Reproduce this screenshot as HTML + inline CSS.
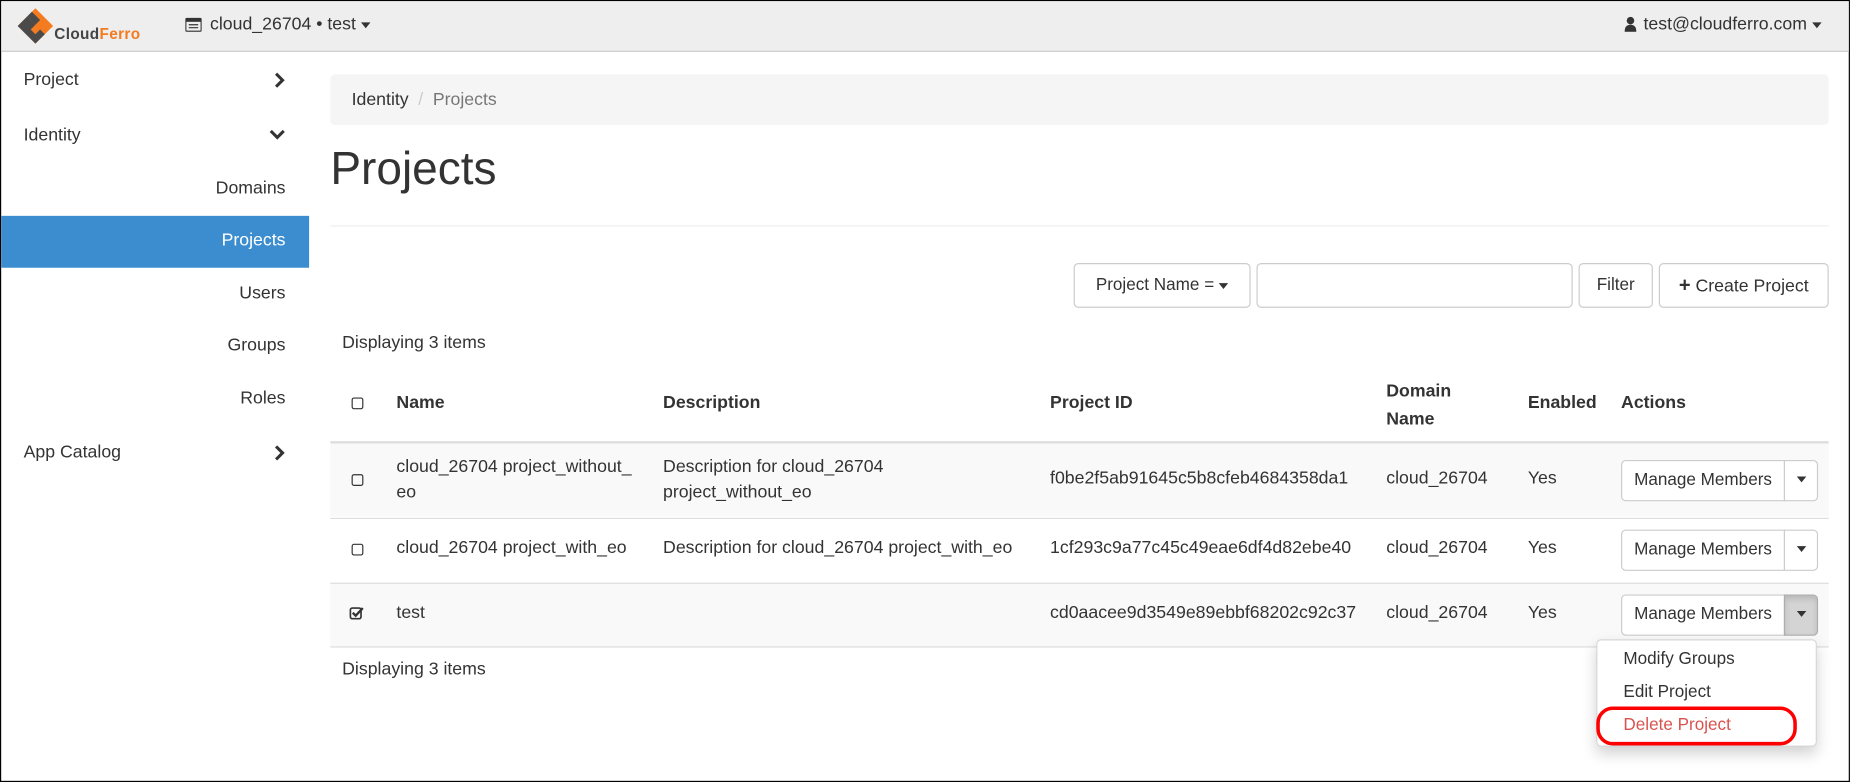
<!DOCTYPE html>
<html><head><meta charset="utf-8"><style>
html,body{margin:0;padding:0;background:#fff;overflow:hidden}
body{width:1850px;height:782px;position:relative}
#w{position:absolute;left:0;top:0;width:1568px;height:663px;transform:scale(1.1798,1.1795);transform-origin:0 0;font-family:"Liberation Sans",Arial,sans-serif;font-size:15px;color:#333;box-sizing:border-box;border:1px solid #000;overflow:hidden}
.a{position:absolute;white-space:nowrap}
.nav{position:absolute;left:0;top:0;width:1568px;height:42px;background:#eee;border-bottom:1px solid #ccc}
.side{color:#333;font-size:15px}
.btn{position:absolute;border:1px solid #ccc;border-radius:4px;background:#fff;box-sizing:border-box;font-size:14.5px;text-align:center}
.row{position:absolute;left:279px;width:1270px;border-top:1px solid #ddd}
.cb{position:absolute;width:10px;height:10px;border:1.3px solid #333;border-radius:2px;box-sizing:border-box}
.car{display:inline-block;width:0;height:0;border-left:4px solid transparent;border-right:4px solid transparent;border-top:5px solid #333;vertical-align:middle}
b{font-weight:bold}
</style></head><body><div id="w">
<div class="nav"></div>
<!-- logo -->
<svg class="a" style="left:13px;top:5px" width="32" height="33" viewBox="0 0 32 33"><polygon points="16,1 31,16 16,31 1,16" fill="#f47b20"/><polygon points="1,16 9,8 16,15 12,19 16,23 20,19 24,23 16,31" fill="#4a4a4a"/><polygon points="9,8 16,15 20,11 13,4" fill="#4a4a4a"/><line x1="12" y1="19" x2="20" y2="11" stroke="#fff" stroke-width="0"/></svg>
<div class="a" style="left:45px;top:20px;font-weight:bold;font-size:13px;letter-spacing:0.3px;color:#444">Cloud<span style="color:#f47b20">Ferro</span></div>
<svg class="a" style="left:156px;top:14px" width="14" height="12" viewBox="0 0 14 12"><rect x="0.5" y="0.5" width="13" height="11" rx="1" fill="none" stroke="#333"/><rect x="0.5" y="0.5" width="13" height="3" fill="#333"/><line x1="3" y1="6" x2="11" y2="6" stroke="#333"/><line x1="3" y1="8.5" x2="11" y2="8.5" stroke="#333"/></svg>
<div class="a" style="left:177px;top:11px;font-size:15px">cloud_26704 • test <span class="car"></span></div>
<svg class="a" style="left:1376px;top:13px" width="10" height="13" viewBox="0 0 10 13"><circle cx="5" cy="3.5" r="3.2" fill="#333"/><path d="M0 13 Q0 7 5 7 Q10 7 10 13Z" fill="#333"/></svg>
<div class="a" style="left:1392px;top:11px;font-size:15px">test@cloudferro.com <span class="car"></span></div>

<!-- sidebar -->
<div class="a side" style="left:19px;top:58px">Project</div>
<svg class="a" style="left:231px;top:60px" width="10" height="14" viewBox="0 0 10 14"><path d="M2 1.5 L7.5 7 L2 12.5" stroke="#333" stroke-width="2.6" fill="none"/></svg>
<div class="a side" style="left:19px;top:105px">Identity</div>
<svg class="a" style="left:227px;top:108px" width="14" height="10" viewBox="0 0 14 10"><path d="M1.5 2 L7 7.5 L12.5 2" stroke="#333" stroke-width="2.6" fill="none"/></svg>
<div class="a side" style="right:1325px;top:150px">Domains</div>
<div class="a" style="left:0;top:182px;width:261px;height:44px;background:#3b8dcf"></div>
<div class="a" style="right:1325px;top:194px;font-size:15px;color:#fff">Projects</div>
<div class="a side" style="right:1325px;top:239px">Users</div>
<div class="a side" style="right:1325px;top:283px">Groups</div>
<div class="a side" style="right:1325px;top:328px">Roles</div>
<div class="a side" style="left:19px;top:374px">App Catalog</div>
<svg class="a" style="left:231px;top:376px" width="10" height="14" viewBox="0 0 10 14"><path d="M2 1.5 L7.5 7 L2 12.5" stroke="#333" stroke-width="2.6" fill="none"/></svg>

<!-- breadcrumb -->
<div class="a" style="left:279px;top:62px;width:1270px;height:43px;background:#f5f5f5;border-radius:4px"></div>
<div class="a" style="left:297px;top:75px;font-size:15px">Identity <span style="color:#ccc;padding:0 4px">/</span> <span style="color:#777">Projects</span></div>
<div class="a" style="left:279px;top:121px;font-size:39px;color:#333">Projects</div>
<div class="a" style="left:279px;top:190px;width:1270px;border-top:1px solid #eee"></div>

<!-- filter -->
<div class="btn" style="left:909px;top:222px;width:150px;height:38px;line-height:36px">Project Name = <span class="car"></span></div>
<div class="btn" style="left:1064px;top:222px;width:268px;height:38px"></div>
<div class="btn" style="left:1337px;top:222px;width:63px;height:38px;line-height:36px">Filter</div>
<div class="btn" style="left:1405px;top:222px;width:144px;height:38px;line-height:36px;font-size:15px"><b style="font-size:17px">+</b> Create Project</div>

<div class="a" style="left:289px;top:281px">Displaying 3 items</div>

<!-- header -->
<div class="cb" style="left:297px;top:336px"></div>
<div class="a" style="left:335px;top:332px"><b>Name</b></div>
<div class="a" style="left:561px;top:332px"><b>Description</b></div>
<div class="a" style="left:889px;top:332px"><b>Project ID</b></div>
<div class="a" style="left:1174px;top:319px;line-height:24px"><b>Domain<br>Name</b></div>
<div class="a" style="left:1294px;top:332px"><b>Enabled</b></div>
<div class="a" style="left:1373px;top:332px"><b>Actions</b></div>
<div class="a" style="left:279px;top:373px;width:1270px;border-top:2px solid #ddd"></div>

<div class="row" style="top:375px;height:62px;background:#f9f9f9;border-top:none"></div>
<div class="row" style="top:438px;height:54px;background:#fff"></div>
<div class="row" style="top:493px;height:54px;background:#f9f9f9"></div>
<div class="row" style="top:547px;height:0"></div>

<div class="cb" style="left:297px;top:401px"></div>
<div class="a" style="left:335px;top:384px;line-height:22px">cloud_26704 project_without_<br>eo</div>
<div class="a" style="left:561px;top:384px;line-height:22px">Description for cloud_26704<br>project_without_eo</div>
<div class="a" style="left:889px;top:396px">f0be2f5ab91645c5b8cfeb4684358da1</div>
<div class="a" style="left:1174px;top:396px">cloud_26704</div>
<div class="a" style="left:1294px;top:396px">Yes</div>

<div class="cb" style="left:297px;top:460px"></div>
<div class="a" style="left:335px;top:455px">cloud_26704 project_with_eo</div>
<div class="a" style="left:561px;top:455px">Description for cloud_26704 project_with_eo</div>
<div class="a" style="left:889px;top:455px">1cf293c9a77c45c49eae6df4d82ebe40</div>
<div class="a" style="left:1174px;top:455px">cloud_26704</div>
<div class="a" style="left:1294px;top:455px">Yes</div>

<svg class="a" style="left:295px;top:513px" width="14" height="12" viewBox="0 0 14 12"><rect x="1" y="1.5" width="9" height="9" rx="1.5" fill="none" stroke="#333" stroke-width="1.4"/><path d="M3 5.5 L5.5 8 L11.5 1.5" stroke="#333" stroke-width="2" fill="none"/></svg>
<div class="a" style="left:335px;top:510px">test</div>
<div class="a" style="left:889px;top:510px">cd0aacee9d3549e89ebbf68202c92c37</div>
<div class="a" style="left:1174px;top:510px">cloud_26704</div>
<div class="a" style="left:1294px;top:510px">Yes</div>

<!-- action buttons -->
<div class="btn" style="left:1373px;top:389px;width:139px;height:35px;line-height:33px;border-radius:4px 0 0 4px">Manage Members</div>
<div class="btn" style="left:1511px;top:389px;width:29px;height:35px;line-height:31px;border-radius:0 4px 4px 0"><span class="car"></span></div>
<div class="btn" style="left:1373px;top:448px;width:139px;height:35px;line-height:33px;border-radius:4px 0 0 4px">Manage Members</div>
<div class="btn" style="left:1511px;top:448px;width:29px;height:35px;line-height:31px;border-radius:0 4px 4px 0"><span class="car"></span></div>
<div class="btn" style="left:1373px;top:503px;width:139px;height:35px;line-height:33px;border-radius:4px 0 0 4px">Manage Members</div>
<div class="btn" style="left:1511px;top:503px;width:29px;height:35px;line-height:31px;border-radius:0 4px 4px 0;background:#d4d4d4;border-color:#adadad;box-shadow:inset 0 3px 5px rgba(0,0,0,.125)"><span class="car"></span></div>

<div class="a" style="left:289px;top:558px">Displaying 3 items</div>

<!-- dropdown -->
<div class="a" style="left:1352px;top:541px;width:187px;height:91px;background:#fff;border:1px solid rgba(0,0,0,.15);border-radius:4px;box-shadow:0 6px 12px rgba(0,0,0,.175);box-sizing:border-box"></div>
<div class="a" style="left:1375px;top:550px;font-size:14.5px">Modify Groups</div>
<div class="a" style="left:1375px;top:578px;font-size:14.5px">Edit Project</div>
<div class="a" style="left:1375px;top:606px;color:#d9534f;font-size:14.5px">Delete Project</div>
<div class="a" style="left:1352px;top:598px;width:170px;height:33px;border:3px solid #f00;border-radius:14px;box-sizing:border-box"></div>
</div></body></html>
